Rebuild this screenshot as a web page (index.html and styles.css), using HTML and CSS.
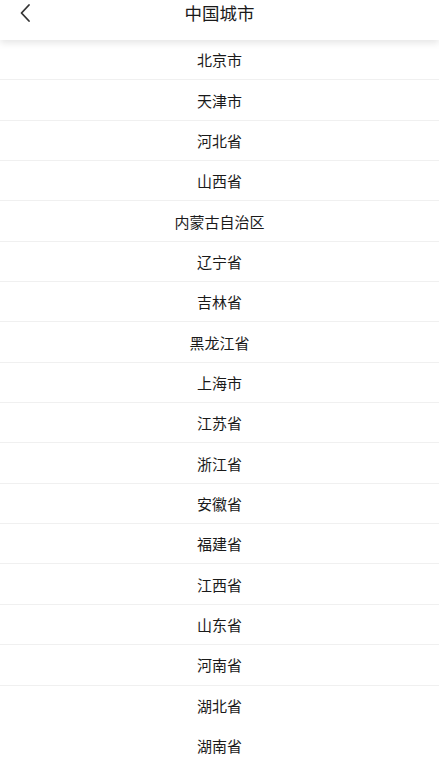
FILE: index.html
```html
<!DOCTYPE html>
<html lang="zh">
<head>
<meta charset="utf-8">
<title>中国城市</title>
<link rel="stylesheet" href="styles.css">
</head>
<body>
<div class="page">
  <header class="topbar">
    <span class="back">
      <svg width="12" height="20" viewBox="0 0 12 20"><path d="M10 2 L2.5 10 L10 18" fill="none" stroke="#333" stroke-width="1.8" stroke-linecap="round" stroke-linejoin="round"/></svg>
    </span>
    <h1 class="title">中国城市</h1>
  </header>
  <ul class="list">
    <li class="row">北京市</li>
    <li class="row">天津市</li>
    <li class="row">河北省</li>
    <li class="row">山西省</li>
    <li class="row">内蒙古自治区</li>
    <li class="row">辽宁省</li>
    <li class="row">吉林省</li>
    <li class="row">黑龙江省</li>
    <li class="row">上海市</li>
    <li class="row">江苏省</li>
    <li class="row">浙江省</li>
    <li class="row">安徽省</li>
    <li class="row">福建省</li>
    <li class="row">江西省</li>
    <li class="row">山东省</li>
    <li class="row">河南省</li>
    <li class="row row-plain">湖北省</li>
    <li class="row row-plain">湖南省</li>
  </ul>
</div>
</body>
</html>
```

FILE: styles.css
```css
html, body {
  margin: 0;
  padding: 0;
  background: #ffffff;
  overflow: hidden;
}
body {
  font-family: "Noto Sans CJK SC", "Noto Sans", sans-serif;
  color: #1a1a1a;
}
.page {
  width: 439px;
  height: 758px;
  overflow: hidden;
}
.topbar {
  position: relative;
  z-index: 2;
  height: 40px;
  background: #ffffff;
  box-shadow: 0 3px 7px rgba(0, 0, 0, 0.10);
  display: flex;
  justify-content: center;
  align-items: flex-start;
}
.back {
  position: absolute;
  left: 19px;
  top: 3px;
  width: 12px;
  height: 20px;
  display: block;
}
.back svg { display: block; }
.title {
  margin: 0;
  font-size: 17.5px;
  font-weight: normal;
  line-height: 26px;
  color: #1a1a1a;
}
.list {
  list-style: none;
  margin: 0;
  padding: 0;
}
.row {
  box-sizing: border-box;
  height: 40.35px;
  border-bottom: 1px solid #f0f0f0;
  display: flex;
  align-items: center;
  justify-content: center;
  font-size: 15px;
  color: #1a1a1a;
}
.row-plain {
  border-bottom-color: transparent;
}
```
